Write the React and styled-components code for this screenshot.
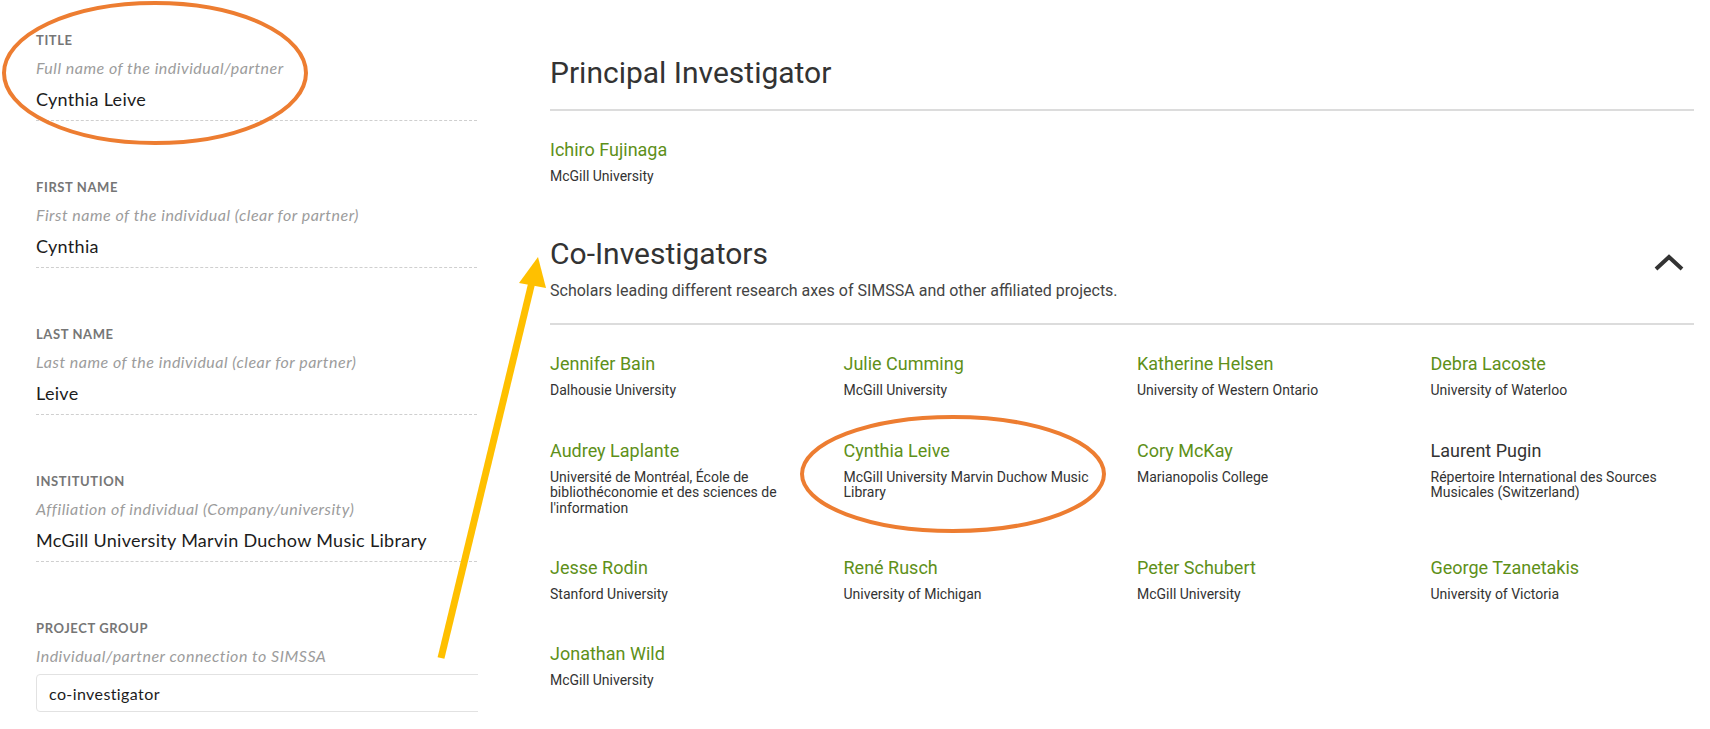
import React from 'react';
import styled, { createGlobalStyle } from 'styled-components';

const GlobalStyle = createGlobalStyle`
  html, body {
    margin: 0;
    padding: 0;
    background: #fff;
  }
  * {
    box-sizing: border-box;
  }
`;

const Page = styled.div`
  position: relative;
  display: flex;
  width: 1710px;
  height: 729px;
  overflow: hidden;
  background: #fff;
`;

// left: the edit form, clipped on its right side
const FormPanel = styled.div`
  width: 478px;
  flex-shrink: 0;
  overflow: hidden;
  padding: 32px 0 0 36px;
  font-family: Lato, "Open Sans", sans-serif;
`;

const Field = styled.div`
  width: ${(p) => (p.wide ? '520px' : '441px')};
  margin-bottom: 58px;
  padding-bottom: ${(p) => (p.boxed ? '0' : '9px')};
  border-bottom: ${(p) => (p.boxed ? 'none' : '1px dashed #cfcfcf')};
`;

const Label = styled.div`
  font-size: 13px;
  line-height: 16px;
  font-weight: 700;
  letter-spacing: 0.6px;
  text-transform: uppercase;
  color: #767676;
`;

const Hint = styled.div`
  margin-top: 10px;
  font-size: 16px;
  line-height: 20px;
  font-style: italic;
  letter-spacing: 0.5px;
  color: #9c9c9c;
`;

const Value = styled.div`
  margin-top: 9px;
  font-size: 18px;
  line-height: 24px;
  letter-spacing: 0.3px;
  color: #1c1c1c;
`;

const TextBox = styled.div`
  margin-top: 8px;
  height: 38px;
  display: flex;
  align-items: center;
  padding-left: 12px;
  border: 1px solid #e2e2e2;
  border-radius: 4px;
  font-size: 16px;
  letter-spacing: 0.4px;
  color: #1c1c1c;
`;

// right: the people listing
const Listing = styled.div`
  flex: 1;
  padding: 55px 16px 0 72px;
  font-family: Roboto, "Liberation Sans", sans-serif;
  color: #333;
`;

const SectionHead = styled.div`
  display: flex;
  justify-content: space-between;
  align-items: flex-start;
  margin-top: ${(p) => p.gap || 0}px;
`;

const Heading = styled.h2`
  margin: 0;
  font-size: 30px;
  line-height: 36px;
  font-weight: 400;
  color: #333;
`;

const Blurb = styled.p`
  margin: 9px 0 0;
  font-size: 16px;
  line-height: 20px;
  color: #444;
`;

const Toggle = styled.button`
  margin: 18px 9px 0 0;
  padding: 0;
  border: none;
  background: none;
  line-height: 0;
  cursor: pointer;
`;

const Rule = styled.hr`
  margin: ${(p) => p.top}px 0 27px;
  border: none;
  border-top: 2px solid #dcdcdc;
`;

const PeopleGrid = styled.div`
  display: grid;
  grid-template-columns: repeat(${(p) => p.cols}, 1fr);
  column-gap: 30px;
  row-gap: 40px;
`;

const Person = styled.div``;

const Name = styled.div`
  font-size: 18px;
  line-height: 24px;
  color: ${(p) => (p.linked ? '#5e9019' : '#333')};
`;

const Affiliation = styled.div`
  margin-top: 7px;
  font-size: 14px;
  line-height: 15.4px;
  color: #333;
`;

const Overlay = styled.svg`
  position: absolute;
  left: 0;
  top: 0;
  pointer-events: none;
`;

const fields = [
  { label: 'Title', hint: 'Full name of the individual/partner', value: 'Cynthia Leive' },
  { label: 'First name', hint: 'First name of the individual (clear for partner)', value: 'Cynthia' },
  { label: 'Last name', hint: 'Last name of the individual (clear for partner)', value: 'Leive' },
  {
    label: 'Institution',
    hint: 'Affiliation of individual (Company/university)',
    value: 'McGill University Marvin Duchow Music Library',
  },
];

const coInvestigators = [
  { name: 'Jennifer Bain', org: 'Dalhousie University', linked: true },
  { name: 'Julie Cumming', org: 'McGill University', linked: true },
  { name: 'Katherine Helsen', org: 'University of Western Ontario', linked: true },
  { name: 'Debra Lacoste', org: 'University of Waterloo', linked: true },
  {
    name: 'Audrey Laplante',
    org: "Université de Montréal, École de bibliothéconomie et des sciences de l'information",
    linked: true,
  },
  { name: 'Cynthia Leive', org: 'McGill University Marvin Duchow Music Library', linked: true },
  { name: 'Cory McKay', org: 'Marianopolis College', linked: true },
  {
    name: 'Laurent Pugin',
    org: 'Répertoire International des Sources Musicales (Switzerland)',
    linked: false,
  },
  { name: 'Jesse Rodin', org: 'Stanford University', linked: true },
  { name: 'René Rusch', org: 'University of Michigan', linked: true },
  { name: 'Peter Schubert', org: 'McGill University', linked: true },
  { name: 'George Tzanetakis', org: 'University of Victoria', linked: true },
  { name: 'Jonathan Wild', org: 'McGill University', linked: true },
];

const ChevronUp = () => (
  <svg width="32" height="18" viewBox="0 0 32 18">
    <polyline points="3,15 16,3 29,15" fill="none" stroke="#333" strokeWidth="4" />
  </svg>
);

export default function App() {
  return (
    <Page>
      <GlobalStyle />

      <FormPanel>
        {fields.map((f) => (
          <Field key={f.label}>
            <Label>{f.label}</Label>
            <Hint>{f.hint}</Hint>
            <Value>{f.value}</Value>
          </Field>
        ))}
        <Field boxed wide>
          <Label>Project group</Label>
          <Hint>Individual/partner connection to SIMSSA</Hint>
          <TextBox>co-investigator</TextBox>
        </Field>
      </FormPanel>

      <Listing>
        <SectionHead>
          <Heading>Principal Investigator</Heading>
        </SectionHead>
        <Rule top={18} />
        <PeopleGrid cols={4}>
          <Person>
            <Name linked>Ichiro Fujinaga</Name>
            <Affiliation>McGill University</Affiliation>
          </Person>
        </PeopleGrid>

        <SectionHead gap={52}>
          <div>
            <Heading>Co-Investigators</Heading>
            <Blurb>Scholars leading different research axes of SIMSSA and other affiliated projects.</Blurb>
          </div>
          <Toggle aria-label="Collapse">
            <ChevronUp />
          </Toggle>
        </SectionHead>
        <Rule top={22} />
        <PeopleGrid cols={4}>
          {coInvestigators.map((p) => (
            <Person key={p.name}>
              <Name linked={p.linked}>{p.name}</Name>
              <Affiliation>{p.org}</Affiliation>
            </Person>
          ))}
        </PeopleGrid>
      </Listing>

      {/* annotation marks drawn over the screenshot */}
      <Overlay width="1710" height="729" viewBox="0 0 1710 729">
        <ellipse cx="155" cy="73" rx="151" ry="70" fill="none" stroke="#ED7D31" strokeWidth="4" />
        <ellipse cx="953" cy="474" rx="151" ry="57" fill="none" stroke="#ED7D31" strokeWidth="4" />
        <line x1="441" y1="658" x2="532" y2="282" stroke="#FFC000" strokeWidth="7" />
        <polygon points="538,257 519,283 546,288" fill="#FFC000" />
      </Overlay>
    </Page>
  );
}
